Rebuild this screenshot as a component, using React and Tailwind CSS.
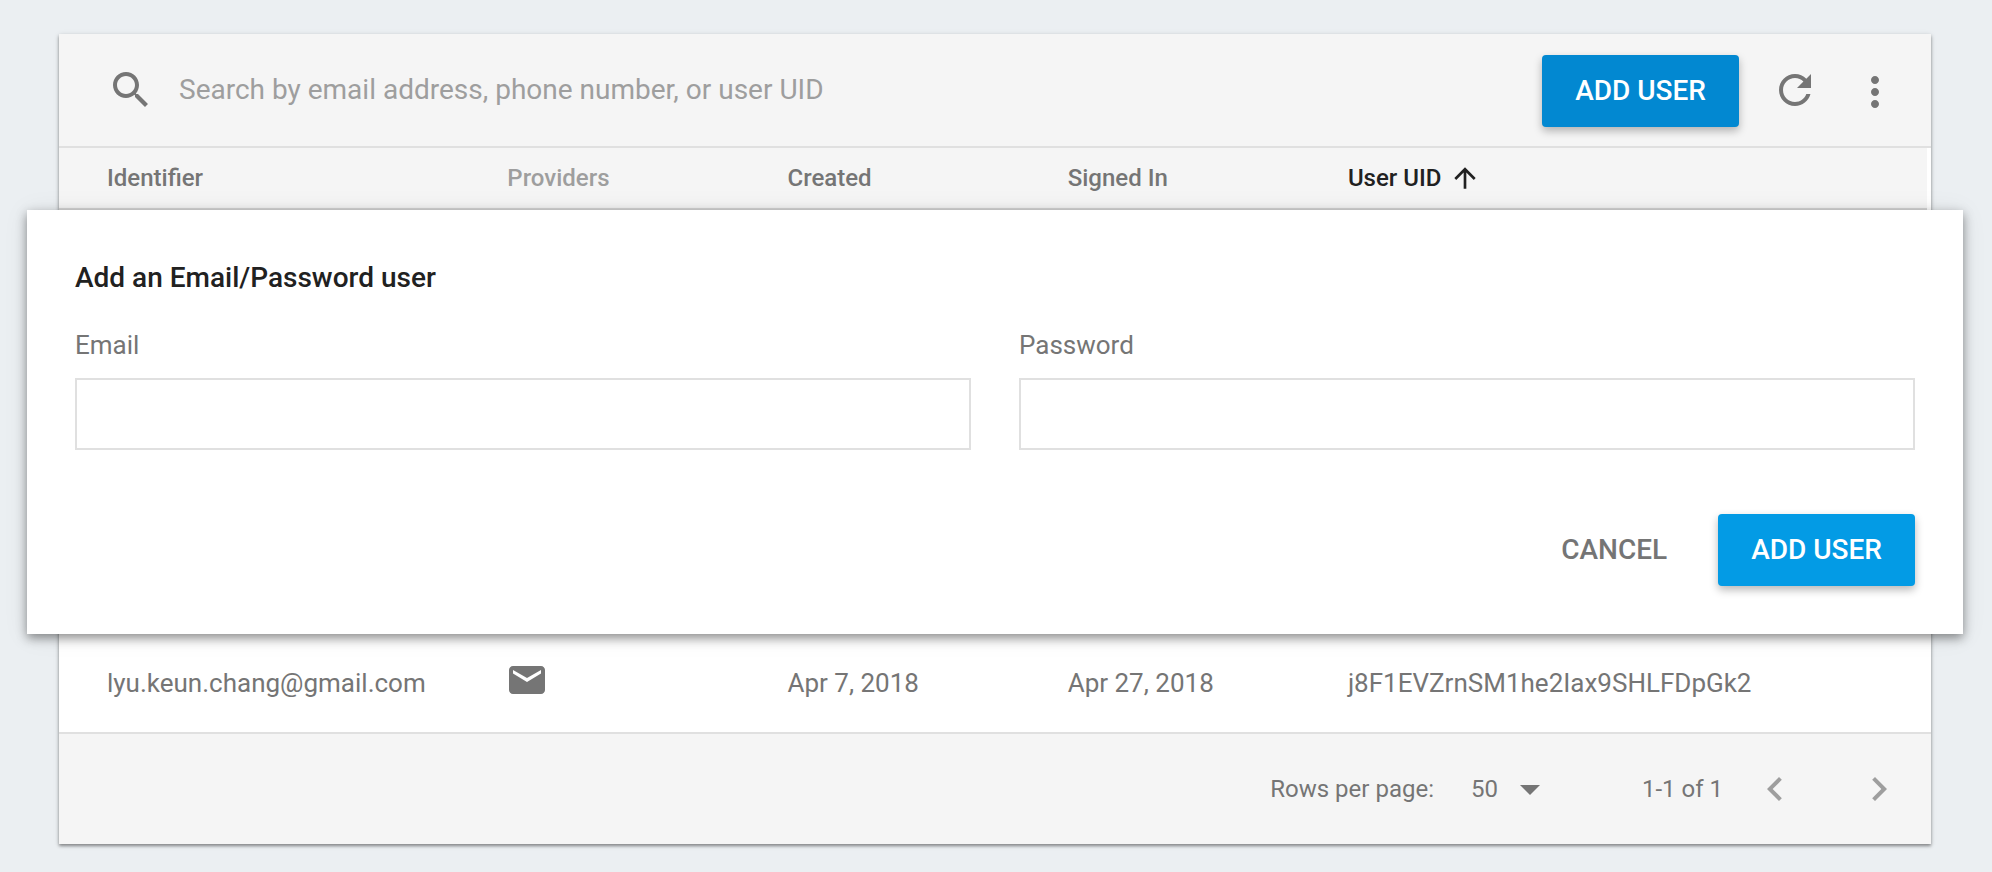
import React from "react";

function Icon({ d, viewBox = "0 0 24 24", className }) {
  return (
    <svg viewBox={viewBox} className={className} fill="currentColor" aria-hidden="true">
      <path d={d} />
    </svg>
  );
}

const SEARCH =
  "M15.5 14h-.79l-.28-.27C15.41 12.59 16 11.11 16 9.5 16 5.91 13.09 3 9.5 3S3 5.91 3 9.5 5.91 16 9.5 16c1.61 0 3.09-.59 4.23-1.57l.27.28v.79l5 4.99L20.49 19l-4.99-5zm-6 0C7.01 14 5 11.99 5 9.5S7.01 5 9.5 5 14 7.01 14 9.5 11.99 14 9.5 14z";
const REFRESH =
  "M17.65 6.35C16.2 4.9 14.21 4 12 4c-4.42 0-7.99 3.58-7.99 8s3.57 8 7.99 8c3.73 0 6.84-2.55 7.73-6h-2.08c-.82 2.33-3.04 4-5.65 4-3.31 0-6-2.69-6-6s2.69-6 6-6c1.66 0 3.14.69 4.22 1.78L13 11h7V4l-2.35 2.35z";
const MORE =
  "M12 8c1.1 0 2-.9 2-2s-.9-2-2-2-2 .9-2 2 .9 2 2 2zm0 2c-1.1 0-2 .9-2 2s.9 2 2 2 2-.9 2-2-.9-2-2-2zm0 6c-1.1 0-2 .9-2 2s.9 2 2 2 2-.9 2-2-.9-2-2-2z";
const ARROW_UP = "M4 12l1.41 1.41L11 7.83V20h2V7.83l5.58 5.59L20 12l-8-8-8 8z";
const CHEVRON_LEFT = "M15.41 7.41L14 6l-6 6 6 6 1.41-1.41L10.83 12z";
const CHEVRON_RIGHT = "M10 6L8.59 7.41 13.17 12l-4.58 4.59L10 18l6-6z";
const CARET = "M7 10l5 5 5-5z";
const MAIL =
  "M4 0h28c2.2 0 4 1.8 4 4v20c0 2.2-1.8 4-4 4H4c-2.2 0-4-1.8-4-4V4c0-2.2 1.8-4 4-4zM4 4v3.6L18 16l14-8.400V4L18 12z";

const raised =
  "h-[72px] rounded-[4px] px-[33px] text-[28px] font-medium whitespace-nowrap text-white uppercase shadow-[0_4px_8px_rgba(0,0,0,0.28)]";

const headCell = "border-b-2 border-[#d6d6d6] font-medium";

function Toolbar() {
  return (
    <div className="flex items-center gap-8 border-b-2 border-[#e0e0e0] bg-[#f5f5f5] pt-[21px] pr-8 pb-[19px] pl-12 text-[#757575]">
      <Icon d={SEARCH} viewBox="0 0.5 24 24" className="size-12 shrink-0" />
      <input
        type="text"
        aria-label="Search users"
        placeholder="Search by email address, phone number, or user UID"
        className="-ml-2 h-12 min-w-0 flex-1 bg-transparent pb-1 text-[28px] outline-none placeholder:text-[#9e9e9e]"
      />
      <button type="button" className={raised + " bg-[#0288d1]"}>
        Add user
      </button>
      <button type="button" aria-label="Refresh" className="shrink-0">
        <Icon d={REFRESH} viewBox="0 0.5 24 24" className="size-12" />
      </button>
      <button type="button" aria-label="More options" className="shrink-0">
        <Icon d={MORE} viewBox="0 -0.5 24 24" className="size-12" />
      </button>
    </div>
  );
}

function Field({ id, label, type }) {
  return (
    <div className="flex min-w-0 flex-1 flex-col gap-[15px]">
      <label htmlFor={id} className="text-[26px] leading-9 text-[#757575]">
        {label}
      </label>
      <input
        id={id}
        type={type}
        className="h-[72px] w-full border-2 border-[#e0e0e0] bg-white px-4 text-[26px] text-[#212121] outline-none"
      />
    </div>
  );
}

function AddUserForm() {
  return (
    <form
      onSubmit={(e) => e.preventDefault()}
      className="relative z-10 -mr-9 -ml-8 bg-white p-12 shadow-[0_4px_10px_rgba(0,0,0,0.42),0_2px_24px_rgba(0,0,0,0.08)]"
    >
      <h2 className="text-[28px] leading-10 font-medium text-[#212121]">Add an Email/Password user</h2>
      <div className="mt-[29px] flex gap-12">
        <Field id="email" label="Email" type="email" />
        <Field id="password" label="Password" type="password" />
      </div>
      <div className="mt-16 flex justify-end gap-4">
        <button
          type="button"
          className="h-[72px] min-w-[176px] text-[28px] font-medium text-[#757575] uppercase"
        >
          Cancel
        </button>
        <button type="submit" className={raised + " bg-[#039be5]"}>
          Add user
        </button>
      </div>
    </form>
  );
}

function UsersTable() {
  return (
    <div className="pr-1">
      <table className="w-full table-fixed border-separate border-spacing-0 text-left text-[#757575]">
        <thead>
          <tr className="h-[62px] bg-[#f5f5f5] text-[24px] whitespace-nowrap">
            <th className={headCell + " w-[24%] pl-12"}>Identifier</th>
            <th className={headCell + " w-[15%] text-[#9e9e9e]"}>Providers</th>
            <th className={headCell + " w-[15%]"}>Created</th>
            <th className={headCell + " w-[15%]"}>Signed In</th>
            <th className={headCell + " text-[#212121]"} aria-sort="ascending">
              <div className="flex items-center gap-2">
                User UID
                <Icon d={ARROW_UP} className="size-8" />
              </div>
            </th>
          </tr>
        </thead>
        <tbody>
          <tr>
            <td colSpan={5} className="p-0">
              <AddUserForm />
            </td>
          </tr>
          <tr className="h-[98px] text-[26px] whitespace-nowrap">
            <td className="pl-12">lyu.keun.chang@gmail.com</td>
            <td>
              <svg
                viewBox="0 0 36 28"
                className="mb-1.5 ml-0.5 h-7 w-9"
                fill="currentColor"
                fillRule="evenodd"
                role="img"
                aria-label="Email"
              >
                <path d={MAIL} />
              </svg>
            </td>
            <td>Apr 7, 2018</td>
            <td>Apr 27, 2018</td>
            <td>j8F1EVZrnSM1he2Iax9SHLFDpGk2</td>
          </tr>
        </tbody>
      </table>
    </div>
  );
}

function Pagination() {
  return (
    <div className="flex h-28 items-center justify-end border-t-2 border-[#e0e0e0] bg-[#f5f5f5] pr-7 text-[24px] text-[#757575]">
      <label htmlFor="rows">Rows per page:</label>
      <div className="relative ml-9 w-[84px]">
        <select id="rows" defaultValue="50" className="h-12 w-full appearance-none bg-transparent pl-px outline-none">
          <option value="50">50</option>
          <option value="100">100</option>
          <option value="250">250</option>
        </select>
        <Icon d={CARET} className="pointer-events-none absolute top-0 right-0 size-12" />
      </div>
      <span className="ml-[88px]">1-1 of 1</span>
      <button type="button" aria-label="Previous page" className="ml-7 text-[#9e9e9e]">
        <Icon d={CHEVRON_LEFT} className="size-12" />
      </button>
      <button type="button" aria-label="Next page" className="ml-14 text-[#9e9e9e]">
        <Icon d={CHEVRON_RIGHT} className="size-12" />
      </button>
    </div>
  );
}

export default function App() {
  return (
    <div className="min-h-screen overflow-x-hidden bg-[#ebeff2] pt-[34px] pr-[61px] pb-7 pl-[59px] font-['Roboto',sans-serif]">
      <main className="bg-white shadow-[0_2px_3px_rgba(0,0,0,0.4),0_1px_6px_rgba(0,0,0,0.1)]">
        <Toolbar />
        <UsersTable />
        <Pagination />
      </main>
    </div>
  );
}
